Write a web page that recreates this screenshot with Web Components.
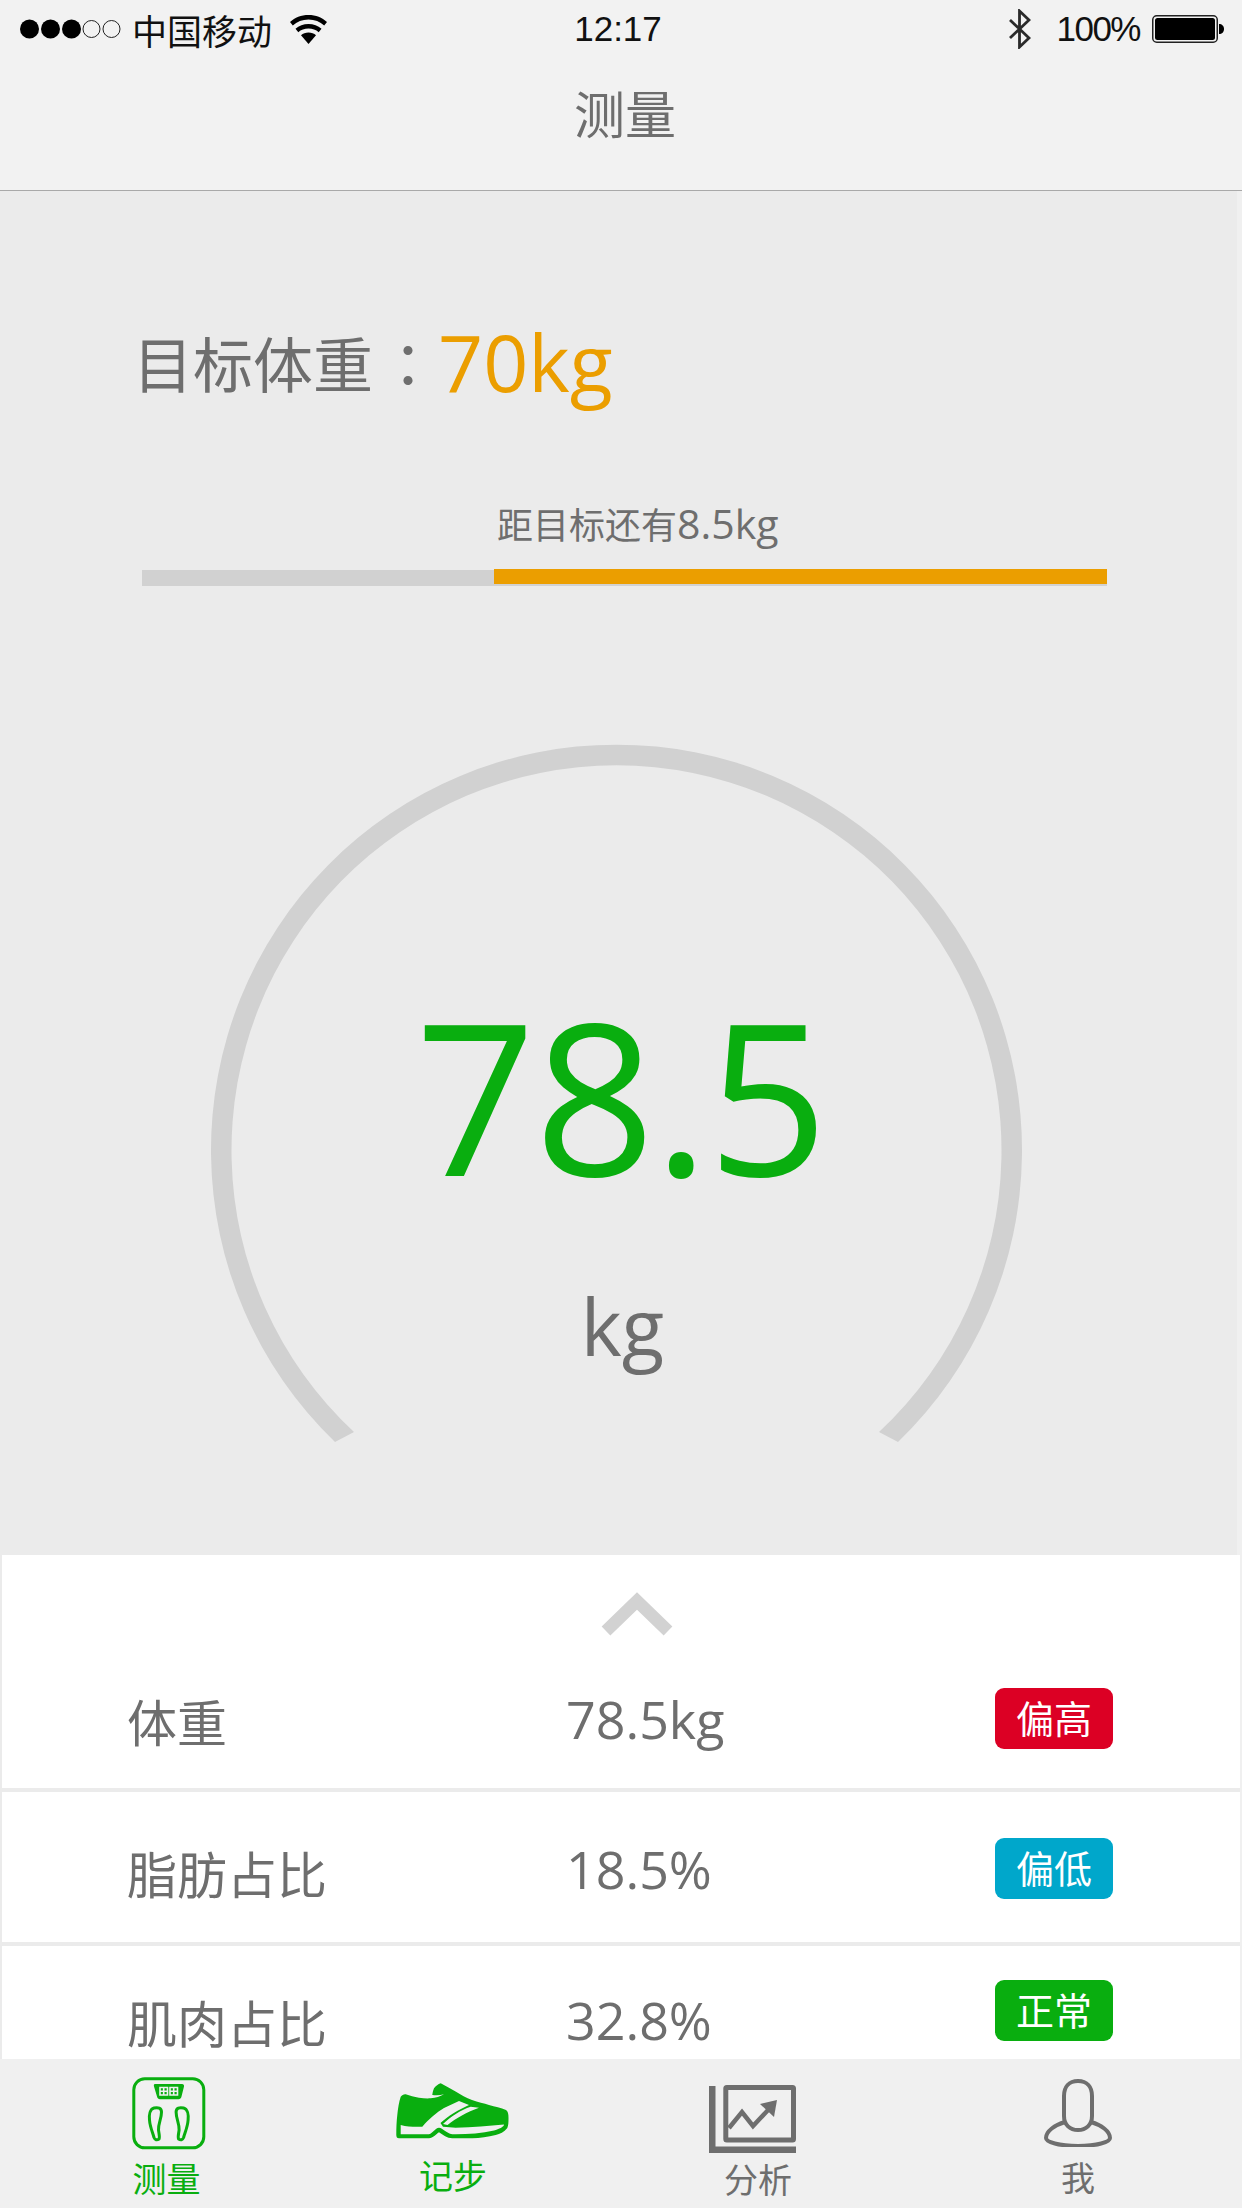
<!DOCTYPE html>
<html lang="zh">
<head>
<meta charset="utf-8">
<title>测量</title>
<style>
  html, body { margin: 0; padding: 0; }
  body {
    width: 1242px;
    height: 2208px;
    overflow: hidden;
    display: flex;
    flex-direction: column;
    background: linear-gradient(to right, #ebebeb 1237px, #f0f0f0 1237px);
    font-family: "Open Sans", "Noto Sans CJK SC", sans-serif;
    color: #6e6e6e;
  }
</style>
</head>
<body>
<app-header></app-header>
<goal-panel goal="70kg" remain="距目标还有" rest="8.5kg"></goal-panel>
<weight-gauge value="78.5" unit="kg"></weight-gauge>
<metric-list>
  <metric-row name="体重" value="78.5kg" tag="偏高" tone="#dc0024" style="--h:237px;--name-top:135px;--value-top:128px;--tag-top:133px"></metric-row>
  <metric-row name="脂肪占比" value="18.5%" tag="偏低" tone="#00a7cb" style="--h:154px;--name-top:50px;--value-top:41px;--tag-top:46px"></metric-row>
  <metric-row name="肌肉占比" value="32.8%" tag="正常" tone="#09ae0f" style="--h:113px;--name-top:45px;--value-top:38px;--tag-top:34px" last></metric-row>
</metric-list>
<tab-bar>
  <tab-item label="测量" active style="--w:338px;--top:18px;--gap:9px;--shift:5px">
    <svg width="74" height="74" viewBox="0 0 74 74" fill="none" stroke="#09ae0f" stroke-width="3">
      <rect x="1.800" y="1.800" width="70" height="69" rx="11"/>
      <path d="M23 7h27c1.500 0 2.300 1 2 2.500l-2.500 10c-.4 1.800-1.500 2.800-3 2.800H28c-1.500 0-2.600-1-3-2.800l-3-10C21.700 8 21.700 7 23 7z" fill="#09ae0f" stroke="none"/>
      <path d="M28 10.500h7.500v7.500H28zM38 10.500h7.500v7.500H38zM28 14.200h7.500M38 14.200h7.500M31.700 10.500V18M41.700 10.500V18" stroke="#f0f0f0" stroke-width="1.600"/>
      <path d="M22 31C26 30 29.500 31 29.500 35 29.500 42 26 47 26.500 53 27 57 28 60 27 62 25 63.500 23 63 22 60.500 20.500 55 18 50 17.500 43 17 38 18 32 22 31Z"/>
      <path d="M22 31C26 30 29.500 31 29.500 35 29.500 42 26 47 26.500 53 27 57 28 60 27 62 25 63.500 23 63 22 60.500 20.500 55 18 50 17.500 43 17 38 18 32 22 31Z" transform="matrix(-1 0 0 1 73.600 0)"/>
    </svg>
  </tab-item>
  <tab-item label="记步" active style="--w:230px;--top:24px;--gap:16px">
    <svg width="114" height="58" viewBox="0 0 114 58" fill="#09ae0f">
      <path d="M44.700 .3C50 3 55 6 60 8.700 65 11.500 70 15 76 17 82 19 88 20.500 93 22 99 23.500 105 25 110 27 112 28.500 112.500 31 112.500 35 112.500 39 112.500 42 111.300 45 108 49 104 51 99.700 52 92 54 84 55 76.300 55.300H56.300C51 55.300 47 52 43 49.300 40 51 37 55.300 33 55.300H3C1 55.300 .3 54 .3 52 .3 45 .5 39 1.300 32 2 25 3 19 4.700 13.700 6 12 8 11 9.700 11.300 14 12.500 18 14 23 14.700 27 15.300 31 15.600 34.700 15.300 40 15 44 13.500 48 11.300 44 12.500 40 12.500 36.300 12 36.500 9 37.500 7 38 5.300 40 3 42 1 44.700 .3Z"/>
      <path fill="#f0f0f0" d="M4.700 42C12 44 20 44 26.300 43.700 33 36 41 29 48 25L63 18 73 22C62 27 52 33 44.500 40L47 43.700 59.700 44.700C77 44.500 93 43 108 41.500 108 44 103 46 98 47.500 85 50.500 70 51.500 56.300 51.300 50 50 47 45 43 44.700 39 45 37 50 33 51.300H4.700Z"/>
      <path fill="#f0f0f0" d="M47 41C55 33 65 27 74.700 23.700L83 24.700C71 29 60 35 51.500 42Z"/>
    </svg>
  </tab-item>
  <tab-item label="分析" style="--w:380px;--top:26px;--gap:8px">
    <svg width="88" height="68" viewBox="0 0 88 68" style="margin-right:10px">
      <path d="M0 1h6.500v60.500H87V68H0z" fill="#6e6e6e"/>
      <rect x="16.800" y="2.500" width="67.700" height="52.500" rx="1" fill="none" stroke="#6e6e6e" stroke-width="5"/>
      <path d="M20 43L33 27 44 41 60 24" fill="none" stroke="#6e6e6e" stroke-width="4.500"/>
      <path d="M68 15L51 19 65 32z" fill="#6e6e6e"/>
    </svg>
  </tab-item>
  <tab-item label="我" style="--w:260px;--top:20px;--gap:12px">
    <svg width="68" height="68" viewBox="0 0 68 68" fill="none" stroke="#6e6e6e" stroke-width="4">
      <path d="M34 2c-9 0-14 6-14 15v20c0 9 6 14 14 14s14-5 14-14V17c0-9-5-15-14-15z"/>
      <path d="M21 43C11 46 2 52 2 59c0 4 13 8 32 8s32-4 32-8c0-7-9-13-19-16"/>
    </svg>
  </tab-item>
</tab-bar>

<script>
class AppHeader extends HTMLElement {
  constructor() {
    super();
    const shadow = this.attachShadow({ mode: 'open' });
    shadow.innerHTML = `
      <style>
        :host { display: block; height: 190px; background: #f2f2f2; border-bottom: 1px solid #a9a9a9; flex: none; }
        .status {
          height: 58px;
          display: grid;
          grid-template-columns: 1fr auto 1fr;
          align-items: center;
          font-family: "Liberation Sans", "Noto Sans CJK SC", sans-serif;
          font-size: 35px;
          color: #111;
        }
        .left, .right { display: flex; align-items: center; }
        .left { padding-left: 20px; }
        .right { justify-content: flex-end; padding-right: 18px; }
        .carrier { margin-left: 11px; margin-right: 18px; }
        .time { margin-right: 6px; }
        .batt-text { letter-spacing: -1.5px; margin: 0 12px 0 25px; }
        h1 {
          margin: 0;
          padding: 19px 0 0 8px;
          font: 400 51px/70px "Noto Sans CJK SC", sans-serif;
          color: #6e6e6e;
          text-align: center;
        }
      </style>
      <div class="status">
        <div class="left">
          <svg width="101" height="20" viewBox="0 0 101 20">
            <g fill="#000"><circle cx="9.500" cy="10" r="9.500"/><circle cx="30.500" cy="10" r="9.500"/><circle cx="51.500" cy="10" r="9.500"/></g>
            <g fill="none" stroke="#222" stroke-width="1"><circle cx="71.500" cy="10" r="8.500"/><circle cx="91.500" cy="10" r="8.500"/></g>
          </svg>
          <span class="carrier">中国移动</span>
          <svg width="37" height="29" viewBox="0 0 37 29" fill="#000">
            <path d="M18.500 0C11 0 5 2.500 0 7l2.800 3.400C7 6.700 12.300 4.500 18.500 4.500S30 6.700 34.200 10.400L37 7C32 2.500 26 0 18.500 0z"/>
            <path d="M18.500 9c-5 0-9.500 1.800-13 4.800l2.800 3.400c2.700-2.400 6.300-3.700 10.200-3.700s7.500 1.300 10.200 3.700l2.800-3.400C28 10.800 23.500 9 18.500 9z"/>
            <path d="M18.500 17.500c-3 0-5.500 1-7.500 2.700L18.500 29l7.500-8.800c-2-1.700-4.500-2.700-7.500-2.700z"/>
          </svg>
        </div>
        <span class="time">12:17</span>
        <div class="right">
          <svg width="22" height="40" viewBox="0 0 22 40" fill="none" stroke="#2a2a2a" stroke-width="2.800">
            <path d="M1 11l19 18-9.500 9V2l9.500 9L1 29"/>
          </svg>
          <span class="batt-text">100%</span>
          <svg width="72" height="28" viewBox="0 0 72 28">
            <rect x=".75" y=".75" width="64.500" height="26.500" rx="4" fill="none" stroke="#222" stroke-width="1.500"/>
            <rect x="3" y="3" width="60" height="22" rx="2.500" fill="#000"/>
            <path d="M67 9c3 0 5 2 5 5s-2 5-5 5z" fill="#000"/>
          </svg>
        </div>
      </div>
      <h1>测量</h1>
    `;
  }
}

class GoalPanel extends HTMLElement {
  constructor() {
    super();
    const shadow = this.attachShadow({ mode: 'open' });
    shadow.innerHTML = `
      <style>
        :host { display: block; flex: none; height: 410px; box-sizing: border-box; padding: 128px 6px 0 133px; }
        .goal { display: flex; align-items: flex-start; height: 86px; font: 400 60px/86px "Noto Sans CJK SC", sans-serif; color: #6e6e6e; }
        /* the TC face centres the full-width colon, like the reference */
        .goal em { font-style: normal; font-family: "Noto Sans CJK TC", sans-serif; margin-left: 5px; }
        .goal b { font: 400 79px/86px "Open Sans", sans-serif; color: #eb9e00; }
        .remain { margin-top: 93px; padding-left: 364px; height: 50px; font: 36px/50px "Noto Sans CJK SC", sans-serif; }
        .remain span { font: 41px/50px "Open Sans", sans-serif; }
        .bar { margin: 22px 0 0 9px; width: 965px; height: 16px; background: #d1d1d1; display: flex; justify-content: flex-end; }
        .bar i { display: block; width: 613px; height: 15px; margin-top: -1px; background: #eb9e00; }
      </style>
      <div class="goal"><span>目标体重</span><em>：</em><b></b></div>
      <div class="remain"></div>
      <div class="bar"><i></i></div>
    `;
    shadow.querySelector('b').textContent = this.getAttribute('goal');
    const remain = shadow.querySelector('.remain');
    remain.textContent = this.getAttribute('remain');
    const rest = document.createElement('span');
    rest.textContent = this.getAttribute('rest');
    remain.appendChild(rest);
  }
}

class WeightGauge extends HTMLElement {
  constructor() {
    super();
    const shadow = this.attachShadow({ mode: 'open' });
    shadow.innerHTML = `
      <style>
        :host { display: block; position: relative; flex: none; height: 954px; }
        svg { display: block; position: absolute; left: 0; top: 0; }
        .num { position: absolute; left: 0; top: 0; width: 1242px; box-sizing: border-box; text-align: center; }
        .value { padding-top: 353px; font: 400 211px/280px "Open Sans", sans-serif; letter-spacing: -1.5px; color: #09ae0f; }
        .unit { padding: 675px 0 0 3px; font: 400 78px/100px "Open Sans", sans-serif; color: #6e6e6e; }
      </style>
      <svg width="1242" height="954" viewBox="0 0 1242 954">
        <path d="M335 841A405.500 405.500 0 1 1 898 841L879 831A385 385 0 1 0 354 831Z" fill="#d1d1d1"/>
      </svg>
      <div class="num value"></div>
      <div class="num unit"></div>
    `;
    shadow.querySelector('.value').textContent = this.getAttribute('value');
    shadow.querySelector('.unit').textContent = this.getAttribute('unit');
  }
}

class MetricList extends HTMLElement {
  constructor() {
    super();
    const shadow = this.attachShadow({ mode: 'open' });
    shadow.innerHTML = `
      <style>
        :host { display: block; position: relative; flex: none; height: 504px; margin: 0 2px; background: #fff; overflow: hidden; }
        svg { position: absolute; left: 595px; top: 36px; }
      </style>
      <svg width="80" height="48" viewBox="0 0 80 48"><path d="M9 40L40 10 71 40" fill="none" stroke="#d2d2d2" stroke-width="12.500"/></svg>
      <slot></slot>
    `;
  }
}

class MetricRow extends HTMLElement {
  constructor() {
    super();
    const shadow = this.attachShadow({ mode: 'open' });
    shadow.innerHTML = `
      <style>
        :host { display: block; box-sizing: border-box; height: var(--h); border-bottom: 4px solid #ebebeb; }
        :host([last]) { border-bottom: 0; }
        .row { display: grid; grid-template-columns: 439px 1fr 118px; padding: 0 127px 0 125px; align-items: start; color: #6e6e6e; }
        .name { margin-top: var(--name-top); font: 50px/60px "Noto Sans CJK SC", sans-serif; }
        .value { margin-top: var(--value-top); font: 52px/72px "Open Sans", sans-serif; }
        .tag { margin-top: var(--tag-top); height: 61px; border-radius: 9px; color: #fff; text-align: center; font: 38px/57px "Noto Sans CJK SC", sans-serif; }
      </style>
      <div class="row">
        <div class="name"></div>
        <div class="value"></div>
        <div class="tag"></div>
      </div>
    `;
    shadow.querySelector('.name').textContent = this.getAttribute('name');
    shadow.querySelector('.value').textContent = this.getAttribute('value');
    const tag = shadow.querySelector('.tag');
    tag.textContent = this.getAttribute('tag');
    tag.style.background = this.getAttribute('tone');
  }
}

class TabBar extends HTMLElement {
  constructor() {
    super();
    const shadow = this.attachShadow({ mode: 'open' });
    shadow.innerHTML = `
      <style>
        :host { display: flex; flex: none; height: 149px; background: #f0f0f0; }
      </style>
      <slot></slot>
    `;
  }
}

class TabItem extends HTMLElement {
  constructor() {
    super();
    const shadow = this.attachShadow({ mode: 'open' });
    shadow.innerHTML = `
      <style>
        :host { display: flex; flex-direction: column; align-items: center; box-sizing: border-box; width: var(--w); padding-top: var(--top); color: #6e6e6e; }
        :host([active]) { color: #09ae0f; }
        .label { margin-top: var(--gap); margin-right: var(--shift, 0); font: 34px/36px "Noto Sans CJK SC", sans-serif; }
        ::slotted(svg) { display: block; }
      </style>
      <slot></slot>
      <div class="label"></div>
    `;
    shadow.querySelector('.label').textContent = this.getAttribute('label');
  }
}

customElements.define('app-header', AppHeader);
customElements.define('goal-panel', GoalPanel);
customElements.define('weight-gauge', WeightGauge);
customElements.define('metric-list', MetricList);
customElements.define('metric-row', MetricRow);
customElements.define('tab-bar', TabBar);
customElements.define('tab-item', TabItem);
</script>
</body>
</html>
